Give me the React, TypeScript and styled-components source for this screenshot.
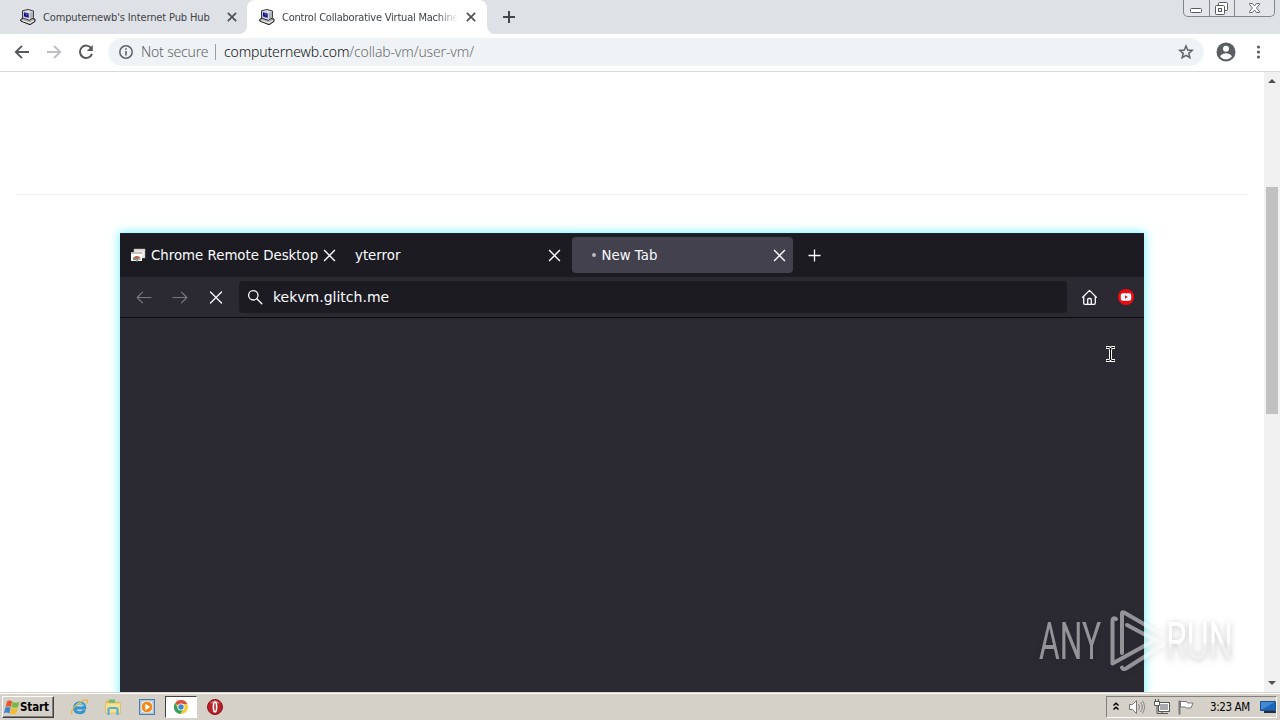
import React from 'react';
import styled, { createGlobalStyle, css } from 'styled-components';

const UI_FONT = `"DejaVu Sans Condensed", "DejaVu Sans", sans-serif`;
const VM_FONT = `"DejaVu Sans", sans-serif`;

const GlobalStyle = createGlobalStyle`
  * { box-sizing: border-box; }
  html, body { margin: 0; height: 100%; overflow: hidden; }
  svg { display: block; flex: none; }
`;

const Desktop = styled.div`
  position: relative;
  width: 1280px;
  height: 720px;
  display: flex;
  flex-direction: column;
  background: #fff;
  font-family: ${UI_FONT};
  overflow: hidden;
`;

/* browser chrome */

const TabStrip = styled.header`
  flex: none;
  height: 34px;
  display: flex;
  background: #dee1e6;
  padding-left: 8px;
`;

const ChromeTab = styled.div<{ $active?: boolean }>`
  position: relative;
  width: ${(props) => (props.$active ? 240 : 239)}px;
  height: 34px;
  padding: 0 ${(props) => (props.$active ? 11 : 10)}px 0 12px;
  display: flex;
  align-items: center;
  ${(props) => props.$active && css`
    background: #fff;
    border-radius: 8px 8px 0 0;
    &::before, &::after {
      content: '';
      position: absolute;
      bottom: 0;
      width: 8px;
      height: 8px;
    }
    &::before {
      left: -8px;
      background: radial-gradient(circle at 0 0, #dee1e6 7.5px, #fff 8.5px);
    }
    &::after {
      right: -8px;
      background: radial-gradient(circle at 100% 0, #dee1e6 7.5px, #fff 8.5px);
    }
  `};
`;

const ChromeTabTitle = styled.span<{ $fade?: boolean }>`
  flex: 1;
  margin: 1px 12px 0 7px;
  font-size: 11px;
  line-height: 16px;
  letter-spacing: -0.13px;
  color: #3f4347;
  white-space: nowrap;
  ${(props) => props.$fade && css`
    margin-right: 8px;
    letter-spacing: -0.22px;
    mask-image: linear-gradient(90deg, #000 88%, transparent);
  `};
`;

const NewTabButton = styled.div`
  padding: 10px 15px;
`;

const WindowButtons = styled.div`
  display: flex;
  margin: 0 5px 0 auto;
  width: 92px;
  height: 17px;
  border: 1px solid #83868e;
  border-top: 0;
  border-radius: 0 0 5px 5px;
  background: #e3e5ea;
`;

const WindowButton = styled.div<{ $width: number }>`
  width: ${(props) => props.$width}px;
  display: flex;
  justify-content: center;
  & + & { border-left: 1px solid #83868e; }
`;

const Toolbar = styled.div`
  flex: none;
  height: 38px;
  display: flex;
  align-items: center;
  border-bottom: 1px solid #d5d7da;
  padding: 0 12px 1px 13px;
`;

const NavButtons = styled.div`
  display: flex;
  gap: 14px;
  width: 95px;
`;

const Omnibox = styled.div`
  width: 1096px;
  height: 28px;
  border-radius: 14px;
  background: #f0f3f5;
  display: flex;
  align-items: center;
  padding: 0 9px 0 9px;
  font-size: 14px;
  line-height: 20px;
  font-family: "Noto Sans", sans-serif;
  font-weight: 300;
`;

const Security = styled.span`
  width: 68px;
  margin-left: 6px;
  white-space: nowrap;
  letter-spacing: -0.18px;
  color: #5f6368;
`;

const Divider = styled.i`
  width: 1px;
  height: 16px;
  margin: 0 8px 0 6px;
  background: #9a9da1;
`;

const Url = styled.span`
  flex: 1;
  color: #6a6e72;
  letter-spacing: -0.14px;
  white-space: nowrap;
  b { color: #111214; font-weight: 300; }
`;

const ToolbarEnd = styled.div`
  display: flex;
  align-items: center;
  margin-left: 10px;
  gap: 10px;
`;

/* page */

const Viewport = styled.main`
  flex: 1;
  min-height: 0;
  display: flex;
`;

const Page = styled.div`
  flex: 1;
  overflow: hidden;
  padding: 122px 16px 0;
`;

const Rule = styled.hr`
  margin: 0;
  border: 0;
  height: 1px;
  background: #eee;
`;

const Scrollbar = styled.div`
  width: 16px;
  background: #f1f1f1;
  display: flex;
  flex-direction: column;
  align-items: center;
`;

const ScrollArrow = styled.i<{ $down?: boolean }>`
  margin: ${(props) => (props.$down ? 'auto 0 7px' : '7px 0 104px')};
  border: 4px solid transparent;
  ${(props) => (props.$down ? 'border-top-color: #505050; border-bottom: 0' : 'border-bottom-color: #505050; border-top: 0')};
`;

const ScrollThumb = styled.i`
  width: 12px;
  height: 227px;
  background: #c1c1c1;
`;

/* remote screen */

const Screen = styled.section`
  width: 1024px;
  height: 520px;
  margin: 38px 0 0 104px;
  background: #2b2a33;
  box-shadow: 0 0 9px 1px #7cf3ff;
  font-family: ${VM_FONT};
  font-size: 14px;
  color: #fbfbfe;
`;

const FoxTabs = styled.div`
  height: 44px;
  display: flex;
  padding: 4px 0;
  background: #1c1b22;
  box-shadow: inset 0 1px #182630;
`;

const FoxTab = styled.div<{ $active?: boolean }>`
  width: 221px;
  margin: 0 2px;
  display: flex;
  align-items: center;
  height: 36px;
  border-radius: 4px;
  padding: 0 7px 0 8px;
  background: ${(props) => (props.$active ? '#42414d' : 'transparent')};
`;

const FoxTitle = styled.span<{ $left: number }>`
  flex: 1;
  padding-left: ${(props) => props.$left}px;
  font-size: 13.33px;
  white-space: nowrap;
`;

const Throbber = styled.i`
  width: 4px;
  height: 4px;
  margin-left: 12px;
  border-radius: 50%;
  background: #b9b8c0;
`;

const FoxPlus = styled.div`
  padding: 12px 0 0 13px;
`;

const FoxBar = styled.div`
  height: 41px;
  display: flex;
  align-items: center;
  border-bottom: 1px solid #0c0c0d;
  padding: 0 10px 0 16px;
`;

const FoxNav = styled.div`
  display: flex;
  gap: 20px;
  width: 103px;
`;

const UrlField = styled.div`
  width: 828px;
  height: 32px;
  display: flex;
  align-items: center;
  gap: 10px;
  padding-left: 8px;
  background: #1c1b22;
  border-radius: 4px;
`;

const FoxButtons = styled.div`
  display: flex;
  align-items: center;
  margin-left: auto;
  gap: 20px;
`;

const Pointer = styled.div`
  position: absolute;
  left: 1105px;
  top: 346px;
`;

const Watermark = styled.div`
  position: absolute;
  left: 1030px;
  top: 600px;
  filter: drop-shadow(0 1px 3px rgba(0, 0, 0, 0.22));
`;

/* taskbar */

const Taskbar = styled.footer`
  flex: none;
  height: 28px;
  display: flex;
  align-items: center;
  background: #d5d0c8;
  border-top: 1px solid #d5d0c8;
  box-shadow: inset 0 1px #fff;
  padding: 2px 3px 2px 2px;
`;

const StartButton = styled.div`
  width: 52px;
  height: 22px;
  display: flex;
  align-items: center;
  padding-left: 1px;
  border: 1px solid;
  border-color: #fff #404040 #404040 #fff;
  box-shadow: inset -1px -1px #808080;
  font-size: 11.5px;
  font-weight: bold;
  letter-spacing: -0.1px;
  color: #000;
`;

const QuickLaunch = styled.div`
  display: flex;
  align-items: center;
  gap: 16px;
  margin-left: 17px;
`;

const ActiveTask = styled.div`
  width: 32px;
  height: 22px;
  margin: 0 -7px 0 -8px;
  display: flex;
  align-items: center;
  justify-content: center;
  background: #fff;
  border: 1px solid;
  border-color: #404040 #fff #fff #404040;
`;

const Tray = styled.div`
  width: 171px;
  height: 22px;
  margin-left: auto;
  display: flex;
  align-items: center;
  border: 1px solid;
  border-color: #808080 #fff #fff #808080;
  padding-left: 5px;
`;

const TrayIcons = styled.div`
  display: flex;
  align-items: center;
  gap: 8px;
  margin-left: 8px;
`;

const Clock = styled.span`
  width: 42px;
  margin: 0 10px 0 15px;
  font-size: 11.5px;
  letter-spacing: -0.38px;
  white-space: nowrap;
  color: #000;
`;

const Cross: React.FC<{ size: number; color: string; weight: number }> = ({ size, color, weight }) => (
  <svg width={size} height={size} viewBox="0 0 12 12">
    <path d="M1 1l10 10M11 1L1 11" stroke={color} strokeWidth={weight} />
  </svg>
);

const Computer = () => (
  <svg width="16" height="16" viewBox="0 0 16 16">
    <path d="M.7 10.500L4 8.500l11 1.500v2.500l-5 3.200L.7 12z" fill="#b4b3b8" stroke="#161616" />
    <path d="M2.500 1.800L8 .5l5.500 1.500v6.500l-4 2.800-7-2.300z" fill="#dddce4" stroke="#222" strokeWidth=".9" />
    <path d="M9.500 4l3.600-1.500v5.500l-3.600 2.500z" fill="#b2b2bc" />
    <path d="M3.500 2.800L9 4.300v5L3.500 7.700z" fill="#111183" stroke="#eee" strokeWidth=".6" />
    <path d="M5.500 4.800l1.500.7v1" stroke="#7581e3" fill="none" />
    <path d="M2.500 11.700l7.500 2.300 4-2.500" stroke="#eee" fill="none" />
  </svg>
);

const Arrow: React.FC<{ color: string; flip?: boolean }> = ({ color, flip }) => (
  <svg width="18" height="18" viewBox="0 0 18 18">
    <path
      d="M16 9H3M9 2.8L2.8 9 9 15.2"
      transform={flip ? 'rotate(180 9 9)' : undefined}
      fill="none" stroke={color} strokeWidth="1.9"
    />
  </svg>
);

const FoxArrow: React.FC<{ flip?: boolean }> = ({ flip }) => (
  <svg width="16" height="16" viewBox="0 0 16 16">
    <path
      d="M15 8.500H1.500M6.500 3.200L1.200 8.500l5.300 5.300"
      transform={flip ? 'matrix(-1 0 0 1 16 0)' : undefined}
      fill="none" stroke="#78777f" strokeWidth="1.2" strokeLinecap="round" strokeLinejoin="round"
    />
  </svg>
);

const BrowserChrome = () => (
  <>
    <TabStrip>
      <ChromeTab>
        <Computer />
        <ChromeTabTitle>Computernewb's Internet Pub Hub</ChromeTabTitle>
        <Cross size={10} color="#4d5156" weight={2} />
      </ChromeTab>
      <ChromeTab $active>
        <Computer />
        <ChromeTabTitle $fade>Control Collaborative Virtual Machine</ChromeTabTitle>
        <Cross size={10} color="#4d5156" weight={2} />
      </ChromeTab>
      <NewTabButton>
        <svg width="14" height="14" viewBox="0 0 14 14">
          <path d="M7 1v12M1 7h12" stroke="#43474b" strokeWidth="2" />
        </svg>
      </NewTabButton>
      <WindowButtons>
        <WindowButton $width={25}>
          <svg width="14" height="16" viewBox="0 0 14 16">
            <rect x=".5" y="8.500" width="11" height="4" rx="1" fill="#fff" stroke="#555963" />
          </svg>
        </WindowButton>
        <WindowButton $width={25}>
          <svg width="14" height="16" viewBox="0 0 14 16">
            <rect x="3.500" y="2.500" width="9" height="8" rx="1" fill="#fff" stroke="#555963" />
            <rect x=".5" y="5.500" width="9" height="9" rx="1" fill="#fff" stroke="#555963" />
            <rect x="3.500" y="8.500" width="3" height="3" fill="#eee" stroke="#555963" />
          </svg>
        </WindowButton>
        <WindowButton $width={40}>
          <svg width="13" height="16" viewBox="0 0 13 16">
            <path d="M1.500 3.500h3l2 2.500 2-2.500h3v1L8.500 8l3 3.500v1h-3l-2-2.500-2 2.500h-3v-1L4.500 8l-3-3.500z" fill="#fff" stroke="#666a73" />
          </svg>
        </WindowButton>
      </WindowButtons>
    </TabStrip>
    <Toolbar>
      <NavButtons>
        <Arrow color="#55595d" />
        <Arrow color="#bcbec1" flip />
        <svg width="18" height="18" viewBox="0 0 18 18">
          <path d="M14.400 5.500A6.200 6.200 0 1 0 15 10.800" fill="none" stroke="#55595d" strokeWidth="2" />
          <path d="M15.800 2v6h-6z" fill="#55595d" />
        </svg>
      </NavButtons>
      <Omnibox>
        <svg width="18" height="18" viewBox="0 0 18 18">
          <circle cx="9" cy="9" r="6.200" fill="none" stroke="#5f6368" strokeWidth="1.500" />
          <path d="M9 8v4.500M9 5.200v1.600" stroke="#5f6368" strokeWidth="1.600" />
        </svg>
        <Security>Not secure</Security>
        <Divider />
        <Url><b>computernewb.com</b>/collab-vm/user-vm/</Url>
        <svg width="18" height="18" viewBox="0 0 24 24">
          <path d="M12 4l2.300 5.400 5.900.5-4.500 3.900 1.400 5.800L12 16.500l-5.100 3.100 1.400-5.800-4.500-3.900 5.900-.5z" fill="none" stroke="#5f6368" strokeWidth="2" />
        </svg>
      </Omnibox>
      <ToolbarEnd>
        <svg width="24" height="24" viewBox="0 0 24 24">
          <circle cx="12" cy="12" r="9.500" fill="#5b5f63" />
          <circle cx="12" cy="8.800" r="3" fill="#fff" />
          <path d="M6 16.200c1.300-2 4-3 6-3s4.700 1 6 3c-1.300 2-3.600 3.100-6 3.100s-4.700-1.100-6-3.100z" fill="#fff" />
        </svg>
        <svg width="20" height="16" viewBox="0 0 20 16" fill="#5b5f63">
          <circle cx="10.500" cy="3" r="1.600" />
          <circle cx="10.500" cy="8" r="1.600" />
          <circle cx="10.500" cy="13" r="1.600" />
        </svg>
      </ToolbarEnd>
    </Toolbar>
  </>
);

const RemoteScreen = () => (
  <Screen>
    <FoxTabs>
      <FoxTab>
        <svg width="16" height="16" viewBox="0 0 16 16">
          <path d="M4 2h11v9H4z" fill="#efe9e7" stroke="#aaa" strokeWidth=".5" />
          <path d="M4 2h11v2H4z" fill="#ded8d6" />
          <path d="M1 5h11v9H1z" fill="#fff" />
          <path d="M1 5h11v2H1z" fill="#c4bfbd" />
          <path d="M3 13a4 4 0 0 1 7.500-2L7.500 13z" fill="#bd6654" />
          <path d="M3 13h3v-2l-2.500-.8z" fill="#77936c" />
          <path d="M8 13h3l-.5-2z" fill="#d9bd73" />
          <circle cx="7" cy="13" r="1.500" fill="#879cac" />
        </svg>
        <FoxTitle $left={5}>Chrome Remote Desktop</FoxTitle>
        <Cross size={13} color="#fbfbfe" weight={1.300} />
      </FoxTab>
      <FoxTab>
        <FoxTitle $left={0}>yterror</FoxTitle>
        <Cross size={13} color="#fbfbfe" weight={1.300} />
      </FoxTab>
      <FoxTab $active>
        <Throbber />
        <FoxTitle $left={5.5}>New Tab</FoxTitle>
        <Cross size={13} color="#fbfbfe" weight={1.300} />
      </FoxTab>
      <FoxPlus>
        <svg width="13" height="13" viewBox="0 0 13 13">
          <path d="M6.500.5v12M.5 6.500h12" stroke="#fbfbfe" strokeWidth="1.300" />
        </svg>
      </FoxPlus>
    </FoxTabs>
    <FoxBar>
      <FoxNav>
        <FoxArrow />
        <FoxArrow flip />
        <svg width="16" height="16" viewBox="0 0 16 16">
          <path d="M2.500 3l11 11M13.500 3l-11 11" stroke="#fbfbfe" strokeWidth="1.300" strokeLinecap="round" />
        </svg>
      </FoxNav>
      <UrlField>
        <svg width="16" height="16" viewBox="0 0 16 16">
          <circle cx="6.300" cy="6.300" r="4.700" fill="none" stroke="#fbfbfe" strokeWidth="1.300" />
          <path d="M9.800 9.800l5 5" stroke="#fbfbfe" strokeWidth="1.400" strokeLinecap="round" />
        </svg>
        <span>kekvm.glitch.me</span>
      </UrlField>
      <FoxButtons>
        <svg width="16" height="16" viewBox="0 0 16 16">
          <path d="M.7 8.200L7.500 1.400l6.800 6.800M1.700 7.300V14q0 1.300 1.300 1.300h9q1.300 0 1.300-1.300V7.300M5.700 15v-4.500q0-1 1-1h1.600q1 0 1 1V15" fill="none" stroke="#fbfbfe" strokeWidth="1.300" strokeLinecap="round" strokeLinejoin="round" />
        </svg>
        <svg width="16" height="16" viewBox="0 0 16 16">
          <circle cx="8" cy="8" r="8" fill="#f00b12" />
          <rect x="2.800" y="4.200" width="10.400" height="7.600" rx="1.800" fill="#fff" />
          <path d="M7 6.300v3.400L9.800 8z" fill="#f00b12" />
        </svg>
      </FoxButtons>
    </FoxBar>
  </Screen>
);

const WindowsFlag = () => (
  <svg width="16" height="16" viewBox="0 0 16 16">
    <path d="M3 2.500q2.500-2 5.200 0L6.800 8Q4.500 6.500 1.600 8z" fill="#e5562a" />
    <path d="M8.800 2.800q3.200 1.800 6.600 0L14 8q-3.500 1.600-6.500.2z" fill="#79b844" />
    <path d="M1.400 8.600q2.800-1.300 5.200.2L5.300 14.500Q3 12.800 0 14z" fill="#3d84cd" />
    <path d="M7.300 9q3 1.500 6.500 0l-1.500 5.500q-3.300 1.500-6.500 0z" fill="#f3bd2f" />
  </svg>
);

const TaskbarRow = () => (
  <Taskbar>
    <StartButton><WindowsFlag />Start</StartButton>
    <QuickLaunch>
      <svg width="18" height="18" viewBox="0 0 18 18">
        <path d="M3.500 10h10.300c.3-7-10.400-6.700-10.300 0 .1 5.500 8.300 6.200 9.800 2" fill="none" stroke="#3296cf" strokeWidth="3" />
        <path d="M4 8c2-3.500 7-3.500 9 0" fill="none" stroke="#9cdcf5" />
        <path d="M1 16C-2 12 11 1 16 2c1 .7.500 2-.5 3.500" fill="none" stroke="#e4b83e" strokeWidth="1.300" />
      </svg>
      <svg width="18" height="18" viewBox="0 0 18 18">
        <path d="M1 4V2.500h6L8 4h7v10H1z" fill="#ddb951" />
        <path d="M4 1.500h6v4H4z" fill="#6eb977" />
        <path d="M.5 5h15v10H.5z" fill="#f6e18e" stroke="#d8b95f" strokeWidth=".7" />
        <path d="M3.500 17v-5.500q0-1.500 1.500-1.500h6q1.500 0 1.500 1.500V17" fill="none" stroke="#55afd5" strokeWidth="2.200" />
      </svg>
      <svg width="18" height="18" viewBox="0 0 18 18">
        <rect x=".5" y="1.500" width="15" height="15" fill="#a6c6e3" stroke="#527ba9" />
        <rect x="2.500" y="3.500" width="11" height="11" fill="#e2edf5" />
        <circle cx="8" cy="9" r="5.700" fill="#f1881b" stroke="#fff2cd" strokeWidth=".7" />
        <path d="M6.300 5.700v6.600l5-3.300z" fill="#fff" />
      </svg>
      <ActiveTask>
        <svg width="16" height="16" viewBox="0 0 16 16">
          <circle cx="8" cy="8" r="7" fill="#f5cc38" />
          <path d="M8 8L2 4.400A7 7 0 0 1 14.300 5H8z" fill="#dd5144" />
          <path d="M2 4.300A7 7 0 0 0 7.300 15l3.300-5.500L8 8l-3 1z" fill="#2fa362" />
          <circle cx="8" cy="8" r="3.500" fill="#fff" />
          <circle cx="8" cy="8" r="2.700" fill="#4285cb" />
        </svg>
      </ActiveTask>
      <svg width="18" height="18" viewBox="0 0 18 18">
        <circle cx="9" cy="9" r="7.500" fill="#b81f27" stroke="#861216" />
        <path d="M4 5q5-5 10 0-5 2-10 0z" fill="#e2686b" />
        <ellipse cx="9" cy="9" rx="1.600" ry="4.800" fill="#a6171c" stroke="#fff" strokeWidth="1.700" />
      </svg>
    </QuickLaunch>
    <Tray>
      <svg width="8" height="10" viewBox="0 0 8 10">
        <path d="M1.500 3.500L4 1.200l2.500 2.300M1.500 7.500L4 5.200l2.500 2.300" fill="none" stroke="#000" strokeWidth="1.500" />
      </svg>
      <TrayIcons>
        <svg width="18" height="16" viewBox="0 0 18 16">
          <path d="M1.500 5.500h3l4-4v13l-4-4h-3z" fill="#fff" stroke="#77777a" />
          <path d="M10.500 5q2 3 0 6M12.500 3q3.500 5 0 10M14.500 1.500q4 6.500 0 13" stroke="#87878a" fill="none" />
        </svg>
        <svg width="16" height="16" viewBox="0 0 16 16">
          <path d="M4.500 3.500h11v9h-11z" fill="#a9a9ac" stroke="#555" />
          <path d="M5.500 4.500h9v7h-9z" fill="none" stroke="#fff" />
          <path d="M.5 2.500h5v4h-5z" fill="#fff" stroke="#555" />
          <path d="M3 6.500v8h11M8 13v2M1.500 0v2M4.500 0v2" fill="none" stroke="#555" />
        </svg>
        <svg width="17" height="16" viewBox="0 0 17 16">
          <path d="M1.500 1.500v14" stroke="#777" strokeWidth="2" />
          <path d="M2.500 2.500h6l1 1.500h5.500l-2 5h-4.500l-1-1h-5z" fill="#fff" stroke="#77777a" />
        </svg>
      </TrayIcons>
      <Clock>3:23 AM</Clock>
      <svg width="17" height="14" viewBox="0 0 17 14">
        <path d="M.5 1.500h15v9H.5z" fill="#1d65b9" stroke="#204f91" />
        <path d="M1 2h14L3 9H1z" fill="#3f8bd3" />
        <path d="M4 12h12" stroke="#222d3d" strokeWidth="2" />
      </svg>
    </Tray>
  </Taskbar>
);

const Brand = () => (
  <Watermark>
    <svg width="220" height="82" viewBox="0 0 220 82">
      <defs>
        <linearGradient id="sheen" x1="0" y1="0" x2="0" y2="1">
          <stop offset=".5" stopColor="#fff" />
          <stop offset=".56" stopColor="#f0f0f0" />
        </linearGradient>
      </defs>
      <g fontFamily="Roboto, sans-serif" fontSize="51">
        <text x="9" y="59" textLength="62" lengthAdjust="spacingAndGlyphs" fill="#fff" opacity=".5">ANY</text>
        <text x="136" y="59" textLength="67" lengthAdjust="spacingAndGlyphs" fill="url(#sheen)">RUN</text>
      </g>
      <g fill="none" stroke="#fff" strokeWidth="4" strokeLinejoin="round" strokeLinecap="round" opacity=".5">
        <path d="M86 19q-3.500-2-3.500 2v42.500L125 40 97 25" />
        <path d="M92 53V13.500q0-2 2-1L132 34.500" />
        <path d="M92 67.500q1 2.500 4 1L133 45" />
      </g>
    </svg>
  </Watermark>
);

const App: React.FC = () => (
  <>
    <GlobalStyle />
    <Desktop>
      <BrowserChrome />
      <Viewport>
        <Page>
          <Rule />
          <RemoteScreen />
        </Page>
        <Scrollbar>
          <ScrollArrow />
          <ScrollThumb />
          <ScrollArrow $down />
        </Scrollbar>
      </Viewport>
      <TaskbarRow />
      <Pointer>
        <svg width="11" height="17" viewBox="0 0 11 17">
          <path d="M1 1.500h3l1.500 1 1.500-1h3M5.500 2v12M1 14.500h3l1.500-1 1.500 1h3" fill="none" stroke="#fff" strokeWidth="3" />
          <path d="M1.500 1.500h2.500l1.500 1 1.500-1h2.500M5.500 2v12M1.500 14.500h2.500l1.500-1 1.500 1h2.500" fill="none" stroke="#000" />
        </svg>
      </Pointer>
      <Brand />
    </Desktop>
  </>
);

export default App;
